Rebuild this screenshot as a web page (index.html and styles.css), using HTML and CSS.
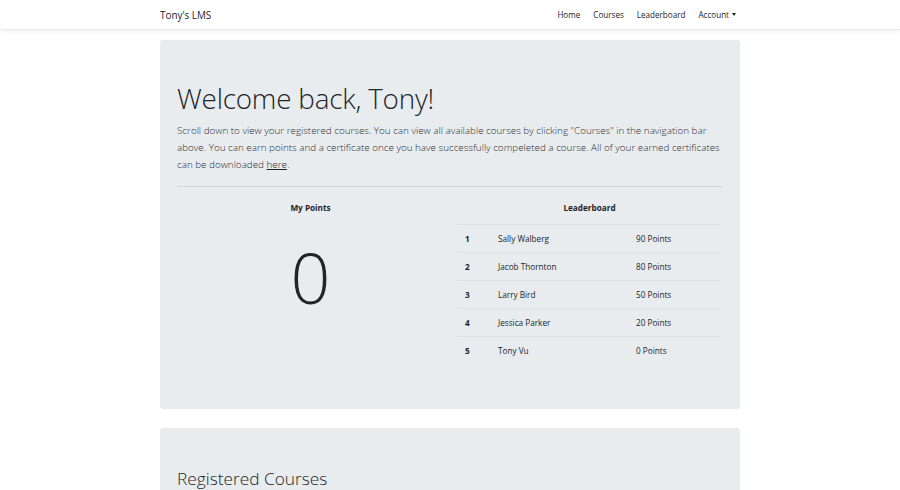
FILE: index.html
```html
<!DOCTYPE html>
<html>
<head>
<meta charset="utf-8">
<link rel="stylesheet" href="styles.css">
</head>
<body>
<nav class="navbar">
  <div class="container nav-inner">
    <a class="brand">Tony's LMS</a>
    <ul class="nav-links">
      <li>Home</li>
      <li>Courses</li>
      <li>Leaderboard</li>
      <li class="dropdown">Account<span class="caret"></span></li>
    </ul>
  </div>
</nav>
<main class="container">
  <section class="jumbotron">
    <h1 class="display">Welcome back, Tony!</h1>
    <p class="lead">Scroll down to view your registered courses. You can view all available courses by clicking "Courses" in the navigation bar above. You can earn points and a certificate once you have successfully compeleted a course. All of your earned certificates can be downloaded <a class="link">here</a>.</p>
    <hr class="divider">
    <div class="row">
      <div class="col">
        <h6 class="col-title">My Points</h6>
        <div class="points">0</div>
      </div>
      <div class="col">
        <h6 class="col-title">Leaderboard</h6>
        <table class="board">
          <tbody>
            <tr><th>1</th><td>Sally Walberg</td><td>90 Points</td></tr>
            <tr><th>2</th><td>Jacob Thornton</td><td>80 Points</td></tr>
            <tr><th>3</th><td>Larry Bird</td><td>50 Points</td></tr>
            <tr><th>4</th><td>Jessica Parker</td><td>20 Points</td></tr>
            <tr><th>5</th><td>Tony Vu</td><td>0 Points</td></tr>
          </tbody>
        </table>
      </div>
    </div>
  </section>
  <section class="jumbotron second">
    <h2 class="section-title">Registered Courses</h2>
  </section>
</main>
</body>
</html>
```
FILE: styles.css
```css
* { box-sizing: border-box; }
html, body { margin: 0; padding: 0; }
body {
  font-family: "Open Sans", "Noto Sans", sans-serif;
  color: #212529;
  background: #fff;
  font-size: 8.2px;
  overflow: hidden;
  height: 490px;
}
.container {
  width: 580px;
  margin: 0 auto;
}
.navbar {
  background: #fff;
  height: 30px;
  box-shadow: 0 1px 4px rgba(0,0,0,0.08);
  border-bottom: 1px solid #ececec;
}
.nav-inner {
  display: flex;
  align-items: center;
  justify-content: space-between;
  height: 100%;
}
.brand {
  font-size: 9.9px;
  color: #212529;
}
.nav-links {
  list-style: none;
  margin: 0;
  padding: 0;
  display: flex;
  gap: 13px;
  font-size: 8.1px;
  color: #212529;
  margin-right: 4px;
}
.caret {
  display: inline-block;
  margin-left: 3px;
  vertical-align: 2px;
  border-top: 3px solid #212529;
  border-left: 2.5px solid transparent;
  border-right: 2.5px solid transparent;
}
main { padding-top: 10px; }
.jumbotron {
  background: #e9ecef;
  border-radius: 3px;
  padding: 40px 17px 0;
  height: 369px;
}
.jumbotron.second {
  margin-top: 19px;
  height: 80px;
  padding-top: 39px;
}
.display {
  font-weight: 300;
  font-size: 27.8px;
  line-height: 36px;
  margin: 0 0 6px;
  letter-spacing: -0.2px;
}
.lead {
  font-size: 9.85px;
  font-weight: 300;
  line-height: 17px;
  margin: 0;
  color: #2b2f33;
}
.link { color: #212529; text-decoration: underline; margin-right: 0.5px; }
.divider {
  border: 0;
  border-top: 1px solid #d3d6d9;
  margin: 13px 0 0;
}
.row {
  display: flex;
  gap: 16px;
  padding: 0 2px;
}
.col { flex: 1; text-align: center; }
.col-title {
  font-size: 8.2px;
  font-weight: 700;
  margin: 15px 0 0;
  line-height: 12px;
}
.points {
  font-weight: 300;
  font-size: 70px;
  line-height: 80px;
  margin-top: 23px;
}
.board {
  width: 100%;
  border-collapse: collapse;
  margin-top: 10px;
  text-align: left;
  font-size: 8.2px;
}
.board tr { height: 28px; border-top: 1px solid #dee2e6; }
.board th { font-weight: 700; padding-left: 7px; width: 39px; }
.board td { font-weight: 400; }
.board td:nth-child(2) { width: 138px; }
.section-title {
  font-weight: 300;
  font-size: 17.3px;
  line-height: 24px;
  margin: 0;
}
```
